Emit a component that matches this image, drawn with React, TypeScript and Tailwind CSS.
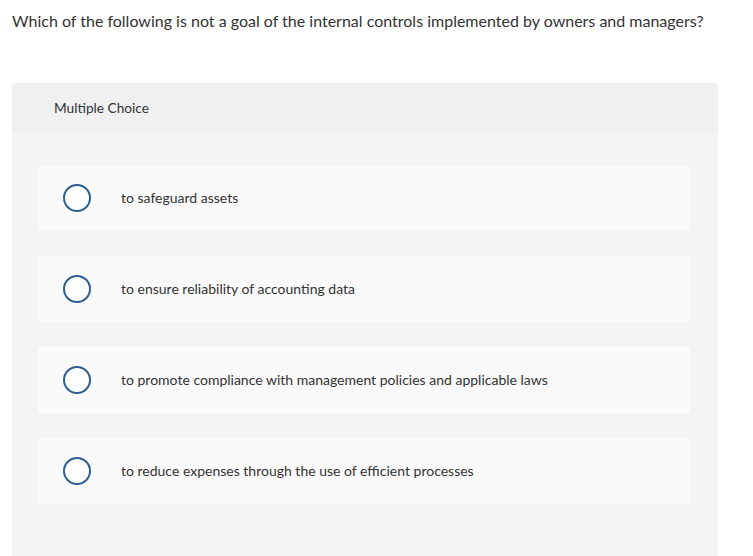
import React from "react";

const options = [
  "to safeguard assets",
  "to ensure reliability of accounting data",
  "to promote compliance with management policies and applicable laws",
  "to reduce expenses through the use of efficient processes",
];

const Option = ({ label }: { label: string }) => (
  <label className="flex items-center h-[66px] rounded-[3px] bg-[#fafafa] pl-[25px]">
    <span className="w-[28px] h-[28px] rounded-full border-2 border-[#2c5e91] bg-white shrink-0" />
    <span className="ml-[30px] text-[14px] leading-[18px] text-[#333]">{label}</span>
  </label>
);

export default function App() {
  return (
    <div className="bg-white min-h-[556px] font-['Lato','Liberation_Sans',sans-serif] text-[#333]">
      <p className="pl-[12px] pt-[11px] text-[16px] leading-[20px]">
        Which of the following is not a goal of the internal controls implemented by owners and managers?
      </p>
      <div className="mt-[52px] ml-[12px] w-[706px] rounded-t-[3px] overflow-hidden">
        <div className="h-[50px] bg-[#f0f0f0] flex items-center pl-[42px] pt-[1px] text-[13.7px]">
          Multiple Choice
        </div>
        <div className="bg-[#f4f4f4] pt-[32px] pb-[60px] pl-[26px] pr-[28px] flex flex-col gap-[25px]">
          {options.map((o) => (
            <Option key={o} label={o} />
          ))}
        </div>
      </div>
    </div>
  );
}
